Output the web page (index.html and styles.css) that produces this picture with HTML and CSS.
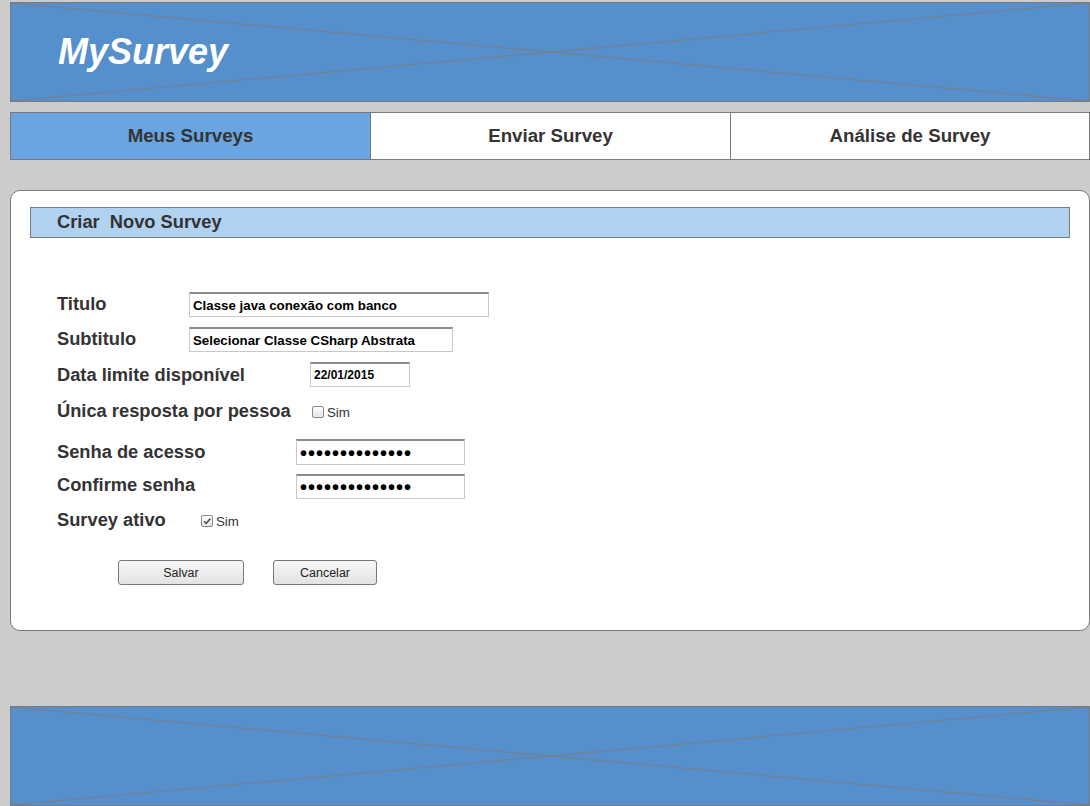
FILE: index.html
```html
<!DOCTYPE html>
<html lang="pt">
<head>
<meta charset="utf-8">
<title>MySurvey</title>
<link rel="stylesheet" href="styles.css">
</head>
<body>
<div class="page">
  <header class="banner">
    <svg class="cross" viewBox="0 0 1078 98" preserveAspectRatio="none">
      <line x1="0" y1="0" x2="1078" y2="98"/>
      <line x1="0" y1="98" x2="1078" y2="0"/>
    </svg>
    <h1 class="logo">MySurvey</h1>
  </header>

  <nav class="tabs">
    <a class="tab active">Meus Surveys</a>
    <a class="tab">Enviar Survey</a>
    <a class="tab">Análise de Survey</a>
  </nav>

  <section class="panel">
    <div class="panel-title">Criar&nbsp; Novo Survey</div>
    <form class="form">
      <div class="row r1">
        <label class="lbl w132">Titulo</label>
        <input class="field f300" type="text" value="Classe java conexão com banco">
      </div>
      <div class="row r2">
        <label class="lbl w132">Subtitulo</label>
        <input class="field f264" type="text" value="Selecionar Classe CSharp Abstrata">
      </div>
      <div class="row r3">
        <label class="lbl w253">Data limite disponível</label>
        <input class="field f100" type="text" value="22/01/2015">
      </div>
      <div class="row r4">
        <label class="lbl w255">Única resposta por pessoa</label>
        <span class="check"></span><span class="sim">Sim</span>
      </div>
      <div class="row r5">
        <label class="lbl w239">Senha de acesso</label>
        <input class="field f169 pass" type="password" value="12345678901234">
      </div>
      <div class="row r6">
        <label class="lbl w239 up">Confirme senha</label>
        <input class="field f169 pass" type="password" value="12345678901234">
      </div>
      <div class="row r7">
        <label class="lbl w144">Survey ativo</label>
        <span class="check checked"><svg viewBox="0 0 10 10"><path d="M2 5.2 L4.2 7.4 L8.4 2.6"/></svg></span><span class="sim">Sim</span>
      </div>
      <div class="buttons">
        <button type="button" class="btn save">Salvar</button>
        <button type="button" class="btn cancel">Cancelar</button>
      </div>
    </form>
  </section>

  <footer class="banner footer">
    <svg class="cross" viewBox="0 0 1078 98" preserveAspectRatio="none">
      <line x1="0" y1="0" x2="1078" y2="98"/>
      <line x1="0" y1="98" x2="1078" y2="0"/>
    </svg>
  </footer>
</div>
</body>
</html>
```

FILE: styles.css
```css
* { box-sizing: border-box; }
html, body { margin: 0; padding: 0; }
body {
  background: #cccccc;
  font-family: "Liberation Sans", Arial, sans-serif;
  color: #333;
}
.page {
  padding: 2px 0 0 10px;
  width: 1090px;
}
.banner {
  position: relative;
  width: 1080px;
  height: 100px;
  background: #5590cc;
  border: 1px solid #7a7a7a;
}
.cross {
  position: absolute;
  left: 0;
  top: 0;
  width: 1078px;
  height: 98px;
}
.cross line {
  stroke: #76808e;
  stroke-width: 1.2;
}
.logo {
  position: relative;
  margin: 0;
  padding: 28px 0 0 47px;
  font-size: 36px;
  line-height: 42px;
  font-style: italic;
  font-weight: bold;
  color: #fff;
}
.tabs {
  display: flex;
  margin-top: 10px;
  width: 1080px;
  height: 48px;
  border: 1px solid #7a7a7a;
  background: #fff;
}
.tab {
  flex: 0 0 360px;
  display: flex;
  align-items: center;
  justify-content: center;
  font-size: 18.7px;
  font-weight: bold;
  color: #333;
  border-right: 1px solid #7a7a7a;
}
.tab:last-child { border-right: none; flex: 1; }
.tab.active { background: #69a5e2; }

.panel {
  margin-top: 30px;
  width: 1080px;
  height: 441px;
  background: #fff;
  border: 1px solid #7a7a7a;
  border-radius: 10px;
  padding: 16px 19px 0 19px;
}
.panel-title {
  height: 31px;
  background: #b1d1f1;
  border: 1px solid #7a7a7a;
  padding-left: 26px;
  font-size: 18.3px;
  font-weight: bold;
  line-height: 27px;
  color: #333;
}
.form {
  padding-left: 27px;
  margin-top: 54px;
}
.row {
  display: flex;
  align-items: center;
}
.lbl {
  font-size: 18.3px;
  font-weight: bold;
  color: #333;
  flex: none;
}
.w132 { width: 132px; }
.w253 { width: 253px; }
.w255 { width: 255px; }
.w239 { width: 239px; }
.w144 { width: 144px; }

.r1 { height: 25px; }
.r2 { height: 25px; margin-top: 10px; }
.r3 { height: 25px; margin-top: 10px; }
.r4 { height: 24px; margin-top: 12px; }
.r5 { height: 26px; margin-top: 16px; }
.r6 { height: 25px; margin-top: 9px; }
.r7 { height: 24px; margin-top: 9px; }

.field {
  height: 100%;
  border: 1px solid #c8c8c8;
  border-top: 2px solid #8c8c8c;
  padding: 0 3px;
  font-family: "Liberation Sans", Arial, sans-serif;
  font-size: 13.3px;
  font-weight: bold;
  color: #000;
  background: #fff;
  outline: none;
}
.f300 { width: 300px; }
.f264 { width: 264px; }
.f100 { width: 100px; font-size: 12px; }
.f169 { width: 169px; }
.pass {
  font-size: 20px;
  letter-spacing: 1px;
  padding-top: 1px;
}
.r1 .lbl, .r2 .lbl { position: relative; top: -1px; }
.lbl.up { position: relative; top: -2px; }

.check {
  display: inline-flex;
  align-items: center;
  justify-content: center;
  width: 12px;
  height: 12px;
  border: 1px solid #8a8a8a;
  border-radius: 2px;
  background: linear-gradient(#fdfdfd, #e4e4e4);
  margin-top: 2px;
}
.check svg { width: 10px; height: 10px; }
.check path {
  fill: none;
  stroke: #555;
  stroke-width: 1.6;
}
.sim {
  margin-left: 3px;
  font-size: 13.3px;
  color: #333;
  margin-top: 3px;
}
.buttons {
  display: flex;
  margin-top: 28px;
  padding-left: 61px;
}
.btn {
  height: 25px;
  border: 1px solid #777;
  border-radius: 3px;
  background: linear-gradient(#f8f8f8, #e2e2e2);
  font-family: "Liberation Sans", Arial, sans-serif;
  font-size: 12.5px;
  color: #222;
  padding: 0;
}
.save { width: 126px; }
.cancel { width: 104px; margin-left: 29px; }

.footer {
  margin-top: 75px;
}
```
